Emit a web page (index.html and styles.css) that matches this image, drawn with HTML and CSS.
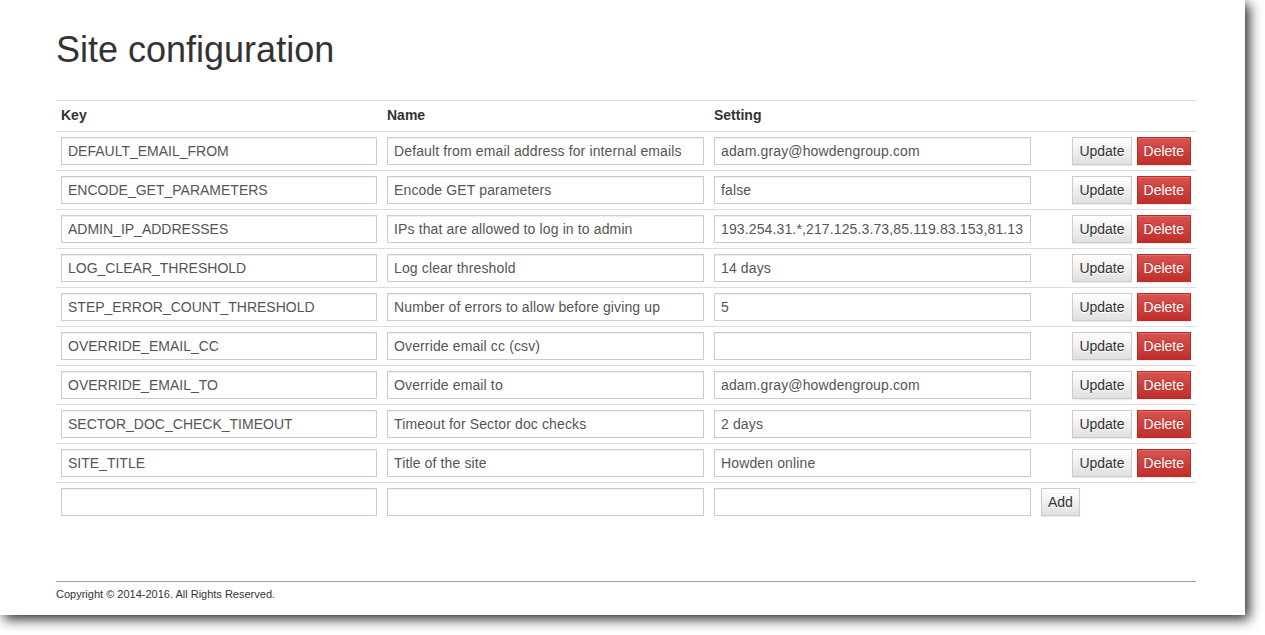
FILE: index.html
```html
<!DOCTYPE html>
<html lang="en">
<head>
<meta charset="utf-8">
<title>Site configuration</title>
<link rel="stylesheet" href="styles.css">
</head>
<body>
<div class="page">
  <div class="container">
    <h1 class="title">Site configuration</h1>
    <table class="config">
      <colgroup>
        <col class="c-key"><col class="c-name"><col class="c-setting"><col class="c-actions">
      </colgroup>
      <thead>
        <tr><th>Key</th><th>Name</th><th>Setting</th><th></th></tr>
      </thead>
      <tbody>
        <tr>
          <td><input class="field" type="text" value="DEFAULT_EMAIL_FROM"></td>
          <td><input class="field wide" type="text" value="Default from email address for internal emails"></td>
          <td><input class="field wide" type="text" value="adam.gray@howdengroup.com"></td>
          <td><div class="actions"><button class="btn btn-default">Update</button><button class="btn btn-danger">Delete</button></div></td>
        </tr>
        <tr>
          <td><input class="field" type="text" value="ENCODE_GET_PARAMETERS"></td>
          <td><input class="field wide" type="text" value="Encode GET parameters"></td>
          <td><input class="field wide" type="text" value="false"></td>
          <td><div class="actions"><button class="btn btn-default">Update</button><button class="btn btn-danger">Delete</button></div></td>
        </tr>
        <tr>
          <td><input class="field" type="text" value="ADMIN_IP_ADDRESSES"></td>
          <td><input class="field wide" type="text" value="IPs that are allowed to log in to admin"></td>
          <td><input class="field wide" type="text" value="193.254.31.*,217.125.3.73,85.119.83.153,81.137.201.2"></td>
          <td><div class="actions"><button class="btn btn-default">Update</button><button class="btn btn-danger">Delete</button></div></td>
        </tr>
        <tr>
          <td><input class="field" type="text" value="LOG_CLEAR_THRESHOLD"></td>
          <td><input class="field wide" type="text" value="Log clear threshold"></td>
          <td><input class="field wide" type="text" value="14 days"></td>
          <td><div class="actions"><button class="btn btn-default">Update</button><button class="btn btn-danger">Delete</button></div></td>
        </tr>
        <tr>
          <td><input class="field" type="text" value="STEP_ERROR_COUNT_THRESHOLD"></td>
          <td><input class="field wide" type="text" value="Number of errors to allow before giving up"></td>
          <td><input class="field wide" type="text" value="5"></td>
          <td><div class="actions"><button class="btn btn-default">Update</button><button class="btn btn-danger">Delete</button></div></td>
        </tr>
        <tr>
          <td><input class="field" type="text" value="OVERRIDE_EMAIL_CC"></td>
          <td><input class="field wide" type="text" value="Override email cc (csv)"></td>
          <td><input class="field wide" type="text" value=""></td>
          <td><div class="actions"><button class="btn btn-default">Update</button><button class="btn btn-danger">Delete</button></div></td>
        </tr>
        <tr>
          <td><input class="field" type="text" value="OVERRIDE_EMAIL_TO"></td>
          <td><input class="field wide" type="text" value="Override email to"></td>
          <td><input class="field wide" type="text" value="adam.gray@howdengroup.com"></td>
          <td><div class="actions"><button class="btn btn-default">Update</button><button class="btn btn-danger">Delete</button></div></td>
        </tr>
        <tr>
          <td><input class="field" type="text" value="SECTOR_DOC_CHECK_TIMEOUT"></td>
          <td><input class="field wide" type="text" value="Timeout for Sector doc checks"></td>
          <td><input class="field wide" type="text" value="2 days"></td>
          <td><div class="actions"><button class="btn btn-default">Update</button><button class="btn btn-danger">Delete</button></div></td>
        </tr>
        <tr>
          <td><input class="field" type="text" value="SITE_TITLE"></td>
          <td><input class="field wide" type="text" value="Title of the site"></td>
          <td><input class="field wide" type="text" value="Howden online"></td>
          <td><div class="actions"><button class="btn btn-default">Update</button><button class="btn btn-danger">Delete</button></div></td>
        </tr>
        <tr>
          <td><input class="field" type="text" value=""></td>
          <td><input class="field wide" type="text" value=""></td>
          <td><input class="field wide" type="text" value=""></td>
          <td><div class="add-actions"><button class="btn btn-default">Add</button></div></td>
        </tr>
      </tbody>
    </table>
    <footer class="footer">Copyright © 2014-2016. All Rights Reserved.</footer>
  </div>
</div>
</body>
</html>
```
FILE: styles.css
```css
html, body {
  margin: 0;
  padding: 0;
  background: #fff;
}
body {
  width: 1265px;
  height: 635px;
  overflow: hidden;
  font-family: "Liberation Sans", Arial, Helvetica, sans-serif;
  font-size: 14px;
  line-height: 20px;
  color: #333;
}
.page {
  width: 1245px;
  height: 615px;
  background: #fff;
  box-shadow: 4px 4px 12px rgba(0, 0, 0, 0.85);
  overflow: hidden;
}
.container {
  width: 1140px;
  padding-left: 56px;
}
.title {
  margin: 30px 0 30px;
  font-size: 36px;
  line-height: 40px;
  font-weight: 500;
  color: #333;
}
.config {
  width: 1140px;
  table-layout: fixed;
  border-collapse: collapse;
  border-spacing: 0;
}
.c-key { width: 326px; }
.c-name { width: 327px; }
.c-setting { width: 327px; }
.c-actions { width: 160px; }
.config th,
.config td {
  padding: 5px;
  border-top: 1px solid #ddd;
  vertical-align: top;
  text-align: left;
}
.config th {
  padding-top: 4px;
  padding-bottom: 6px;
  font-weight: bold;
  line-height: 20px;
}
.field {
  display: block;
  box-sizing: border-box;
  width: 100%;
  height: 28px;
  margin: 0;
  padding: 3px 6px;
  border: 1px solid #ccc;
  border-radius: 0;
  background: #fff;
  box-shadow: inset 0 1px 1px rgba(0, 0, 0, 0.075);
  font-family: "Liberation Sans", Arial, Helvetica, sans-serif;
  font-size: 14px;
  line-height: 20px;
  color: #555;
  outline: none;
}
.wide {
  letter-spacing: 0.13px;
}
.actions {
  display: flex;
  justify-content: flex-end;
  gap: 5px;
}
.add-actions {
  display: flex;
  justify-content: flex-start;
}
.btn {
  box-sizing: border-box;
  height: 28px;
  margin: 0;
  padding: 3px 6px;
  border: 1px solid #ccc;
  border-radius: 0;
  font-family: "Liberation Sans", Arial, Helvetica, sans-serif;
  font-size: 14px;
  line-height: 20px;
  cursor: pointer;
  box-shadow: inset 0 1px 0 rgba(255, 255, 255, 0.15), 0 1px 1px rgba(0, 0, 0, 0.075);
}
.btn-default {
  color: #333;
  background: linear-gradient(to bottom, #fff 0%, #e0e0e0 100%);
  border-color: #ccc;
  text-shadow: 0 1px 0 #fff;
}
.btn-danger {
  color: #fff;
  background: linear-gradient(to bottom, #d9534f 0%, #c12e2a 100%);
  border-color: #b92c28;
  text-shadow: 0 -1px 0 rgba(0, 0, 0, 0.2);
}
.footer {
  margin-top: 60px;
  border-top: 1px solid #a0a0a0;
  padding-top: 4px;
  font-size: 11px;
  line-height: 16px;
  color: #333;
}
```
